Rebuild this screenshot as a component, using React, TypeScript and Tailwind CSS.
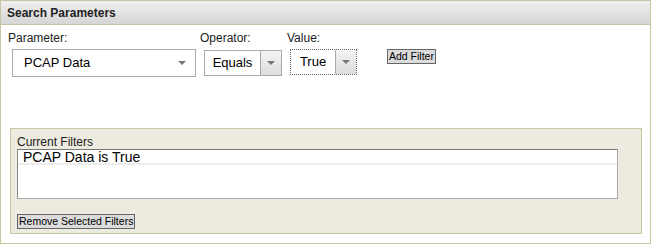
import React from 'react';

const font = { fontFamily: '"Liberation Sans", Arial, sans-serif' };

function Caret() {
  return (
    <svg width="8" height="4" viewBox="0 0 8 4">
      <path d="M0 0 L8 0 L4 4 Z" fill="#777" />
    </svg>
  );
}

function SplitSelect({ value, width, focused }: { value: string; width: string; focused?: boolean }) {
  return (
    <div
      className={`flex h-[26px] ${width} bg-white ${
        focused ? 'border border-dotted border-[#666]' : 'border border-[#aaa]'
      }`}
    >
      <div className="flex-1 flex items-center justify-center text-[13px] text-black">{value}</div>
      <div className="w-[21px] flex items-center justify-center border-l border-[#aaa] bg-gradient-to-b from-[#f4f4f4] to-[#dcdcdc]">
        <Caret />
      </div>
    </div>
  );
}

export default function App() {
  return (
    <div style={font} className="w-[652px] h-[246px] bg-white">
      <div className="w-[651px] h-[244px] border border-[#c9c59f] flex flex-col">
        {/* Header */}
        <div className="h-[24px] shrink-0 flex items-center px-[6px] border-b border-[#c9c59f] bg-gradient-to-b from-[#f0f0f0] to-[#d5d5d5]">
          <span className="text-[12px] font-bold text-[#222]">Search Parameters</span>
        </div>

        {/* Parameters row */}
        <div className="flex items-start pl-[7px] pt-[6px] text-[12px] text-[#222]">
          <div className="w-[192px] flex flex-col">
            <span className="leading-[14px]">Parameter:</span>
            <div className="mt-[4px] ml-[4px] w-[184px] h-[28px] border border-[#aaa] flex items-center justify-between pl-[11px] pr-[9px] bg-white">
              <span className="text-[13px] text-black">PCAP Data</span>
              <Caret />
            </div>
          </div>
          <div className="w-[87px] flex flex-col">
            <span className="leading-[14px]">Operator:</span>
            <div className="mt-[5px] ml-[4px]">
              <SplitSelect value="Equals" width="w-[78px]" />
            </div>
          </div>
          <div className="w-[100px] flex flex-col">
            <span className="leading-[14px]">Value:</span>
            <div className="mt-[4px] ml-[3px]">
              <SplitSelect value="True" width="w-[67px]" focused />
            </div>
          </div>
          <button className="mt-[18px] h-[15px] px-[1px] border border-[#666] bg-[#dcdcdc] text-[10.5px] leading-[13px] text-black">
            Add Filter
          </button>
        </div>

        {/* Current filters */}
        <div className="ml-[9px] mt-[51px] w-[632px] h-[106px] border border-[#c9c59f] bg-[#edeae0] pl-[6px] pt-[6px] flex flex-col items-start">
          <span className="text-[12px] leading-[14px] text-[#222]">Current Filters</span>
          <div className="w-[601px] h-[50px] bg-white border border-t-[#777] border-l-[#888] border-r-[#aaa] border-b-[#aaa]">
            <div className="h-[15px] border-b-2 border-[#ececec] pl-[5px] text-[14px] leading-[14px] text-black">
              PCAP Data is True
            </div>
          </div>
          <button className="mt-[15px] h-[15px] px-[1px] border border-[#666] bg-[#dcdcdc] text-[10.5px] leading-[13px] text-black">
            Remove Selected Filters
          </button>
        </div>
      </div>
    </div>
  );
}
